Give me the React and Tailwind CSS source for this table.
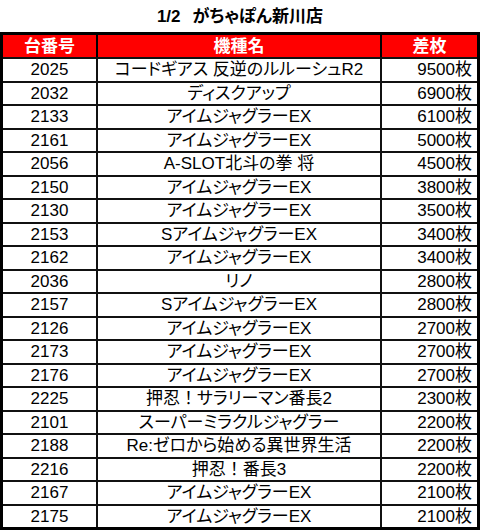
import React from 'react';

const rows = [
  ['2025', 'コードギアス 反逆のルルーシュR2', '9500枚'],
  ['2032', 'ディスクアップ', '6900枚'],
  ['2133', 'アイムジャグラーEX', '6100枚'],
  ['2161', 'アイムジャグラーEX', '5000枚'],
  ['2056', 'A-SLOT北斗の拳 将', '4500枚'],
  ['2150', 'アイムジャグラーEX', '3800枚'],
  ['2130', 'アイムジャグラーEX', '3500枚'],
  ['2153', 'SアイムジャグラーEX', '3400枚'],
  ['2162', 'アイムジャグラーEX', '3400枚'],
  ['2036', 'リノ', '2800枚'],
  ['2157', 'SアイムジャグラーEX', '2800枚'],
  ['2126', 'アイムジャグラーEX', '2700枚'],
  ['2173', 'アイムジャグラーEX', '2700枚'],
  ['2176', 'アイムジャグラーEX', '2700枚'],
  ['2225', '押忍！サラリーマン番長2', '2300枚'],
  ['2101', 'スーパーミラクルジャグラー', '2200枚'],
  ['2188', 'Re:ゼロから始める異世界生活', '2200枚'],
  ['2216', '押忍！番長3', '2200枚'],
  ['2167', 'アイムジャグラーEX', '2100枚'],
  ['2175', 'アイムジャグラーEX', '2100枚'],
];

// 全角「！」は詰めずに幅を残す
const Name = ({ text }) => {
  const parts = text.split('！');
  if (parts.length === 1) return text;
  return (
    <>
      {parts[0]}
      <span className="inline-block w-[17px] text-center">！</span>
      {parts[1]}
    </>
  );
};

const App = () => {
  return (
    <div className="w-[480px] h-[530px] bg-white text-black font-['Liberation_Sans','Noto_Sans_CJK_JP',sans-serif] [font-feature-settings:'palt'] overflow-hidden">
      {/* タイトル */}
      <div className="h-[32px] flex items-center justify-center text-[17px] font-bold leading-none">
        <span>1/2</span>
        <span className="ml-[12px]">がちゃぽん新川店</span>
      </div>

      {/* 表 */}
      <div className="border-[3px] border-black">
        <div className="flex h-[22px] bg-[#ff0000] text-white text-[17px] font-bold leading-none">
          <div className="w-[93px] flex items-center justify-center">台番号</div>
          <div className="w-[284px] border-l-2 border-black flex items-center justify-center">機種名</div>
          <div className="flex-1 border-l-2 border-black flex items-center justify-center">差枚</div>
        </div>
        {rows.map((r) => (
          <div key={r[0] + r[1] + r[2]} className="flex h-[23.5px] border-t-2 border-[#111] text-[17px] leading-none">
            <div className="w-[93px] flex items-center justify-center">{r[0]}</div>
            <div className="w-[284px] border-l-2 border-[#111] flex items-center justify-center whitespace-nowrap">
              <Name text={r[1]} />
            </div>
            <div className="flex-1 border-l-2 border-[#111] flex items-center justify-end pr-[5px]">{r[2]}</div>
          </div>
        ))}
      </div>
    </div>
  );
};

export default App;
